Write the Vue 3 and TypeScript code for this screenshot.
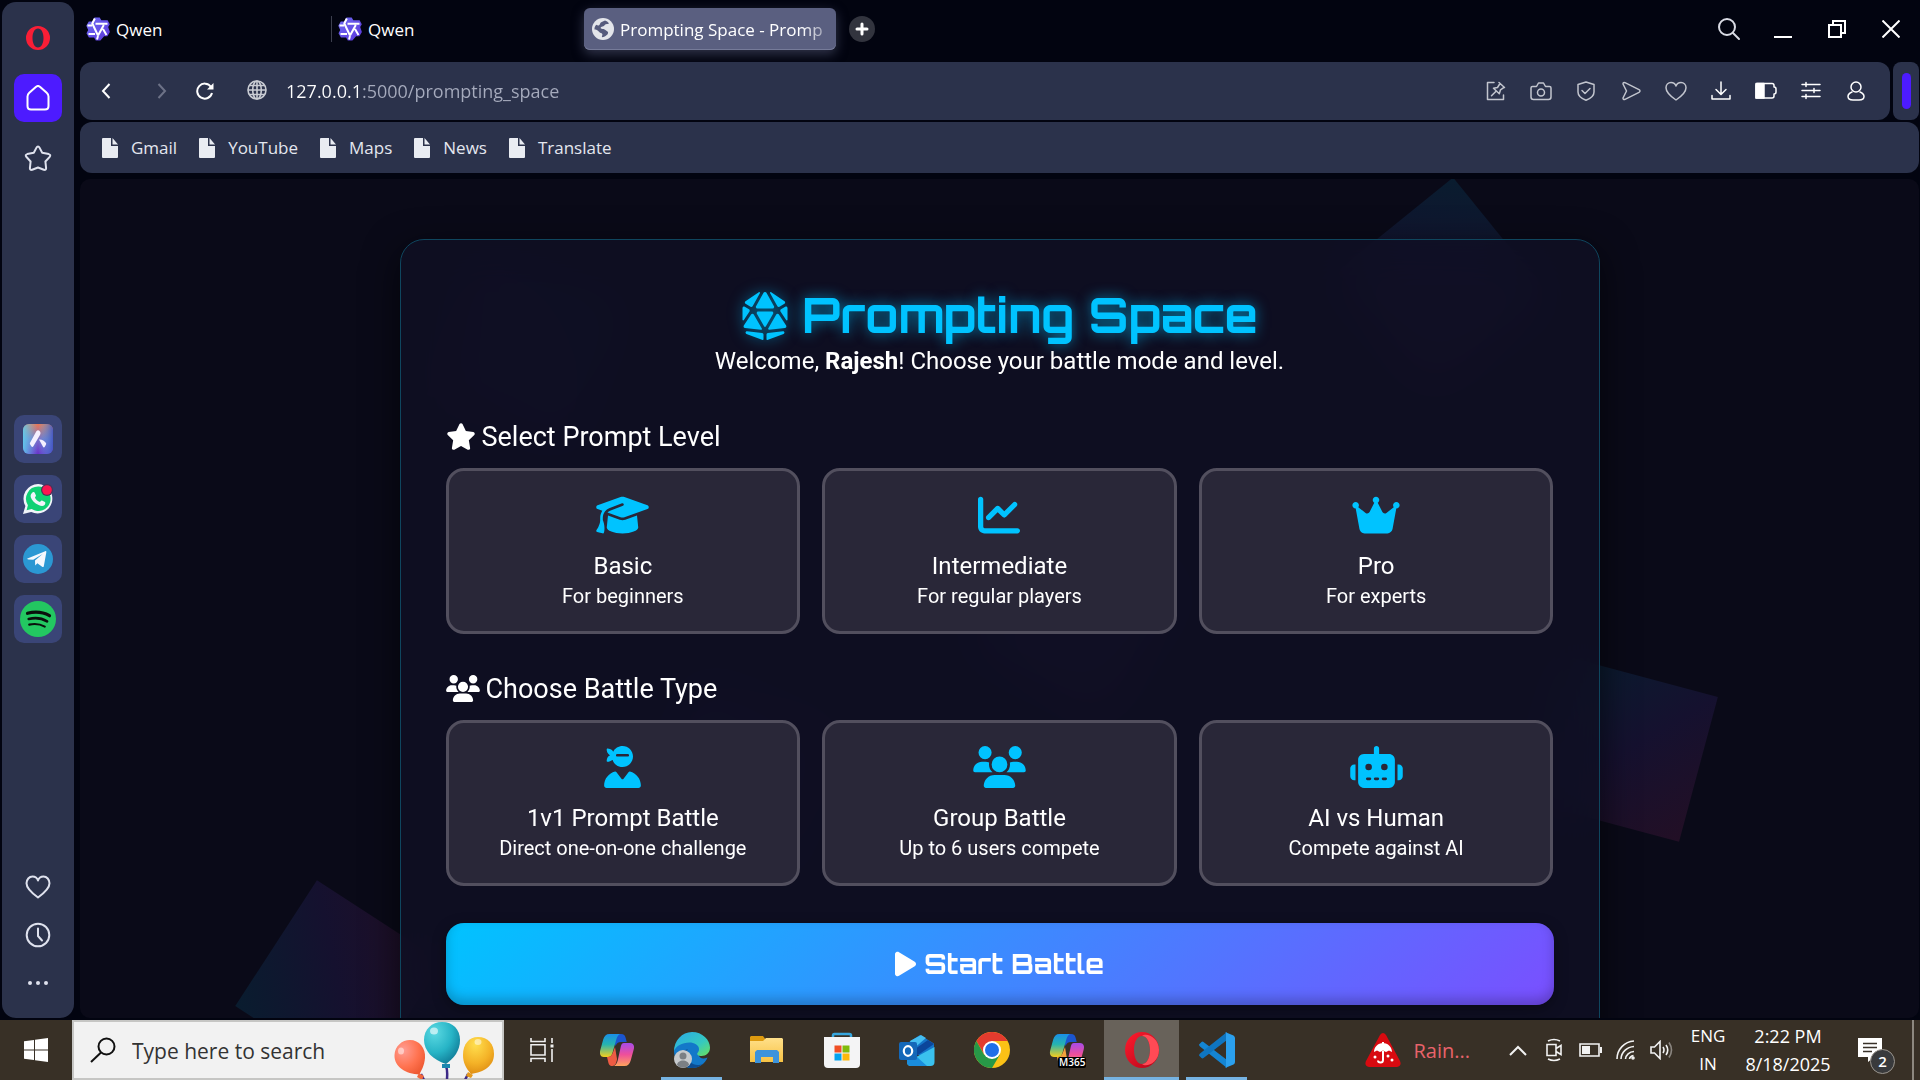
<script setup lang="ts">
import { ref } from 'vue'

interface Option {
  id: string
  title: string
  note: string
  box: string
  width: number
  path: string
}

const usersPath =
  'M144 0a80 80 0 1 1 0 160A80 80 0 1 1 144 0zM512 0a80 80 0 1 1 0 160A80 80 0 1 1 512 0zM0 298.7C0 239.8 47.8 192 106.7 192h42.7c15.9 0 31 3.5 44.6 9.7c-1.3 7.2-1.9 14.7-1.9 22.3c0 38.2 16.8 72.5 43.3 96c-.2 0-.4 0-.7 0H21.3C9.6 320 0 310.4 0 298.7zM405.3 320c-.2 0-.4 0-.7 0c26.6-23.5 43.3-57.8 43.3-96c0-7.6-.7-15-1.9-22.3c13.6-6.3 28.7-9.7 44.6-9.7h42.7C592.2 192 640 239.8 640 298.7c0 11.8-9.6 21.3-21.3 21.3H405.3zM224 224a96 96 0 1 1 192 0 96 96 0 1 1 -192 0zM128 485.3C128 411.7 187.7 352 261.3 352H378.7C452.3 352 512 411.7 512 485.3c0 14.7-11.9 26.7-26.7 26.7H154.7c-14.7 0-26.7-11.9-26.7-26.7z'

const levels: Option[] = [
  {
    id: 'basic',
    title: 'Basic',
    note: 'For beginners',
    box: '0 0 640 512',
    width: 53,
    path: 'M320 32c-8.1 0-16.1 1.4-23.7 4.1L15.8 137.4C6.3 140.9 0 149.9 0 160s6.3 19.1 15.8 22.6l57.9 20.9C57.3 229.3 48 259.8 48 291.9v28.1c0 28.4-10.8 57.7-22.3 80.8c-6.5 13-13.9 25.8-22.5 37.6C0 442.7-.9 448.3 .9 453.4s6 8.9 11.2 10.2l64 16c4.2 1.1 8.7 .3 12.4-2s6.3-6.1 7.1-10.4c8.6-42.8 4.3-81.2-2.1-108.7C90.3 344.3 86 329.8 80 316.5V291.9c0-30.2 10.2-58.7 27.9-81.5c12.9-15.5 29.6-28 49.2-35.7l157-61.7c8.2-3.2 17.5 .8 20.7 9s-.8 17.5-9 20.7l-157 61.7c-12.4 4.9-23.3 12.4-32.2 21.6l159.6 57.6c7.6 2.7 15.6 4.1 23.7 4.1s16.1-1.4 23.7-4.1L624.2 182.6c9.5-3.4 15.8-12.5 15.8-22.6s-6.3-19.1-15.8-22.6L343.7 36.1C336.1 33.4 328.1 32 320 32zM128 408c0 35.3 86 72 192 72s192-36.7 192-72L496.7 262.6 354.5 314c-11.1 4-22.8 6-34.5 6s-23.5-2-34.5-6L143.3 262.6 128 408z',
  },
  {
    id: 'intermediate',
    title: 'Intermediate',
    note: 'For regular players',
    box: '0 0 512 512',
    width: 42,
    path: 'M64 64c0-17.7-14.3-32-32-32S0 46.3 0 64V400c0 44.2 35.8 80 80 80H480c17.7 0 32-14.3 32-32s-14.3-32-32-32H80c-8.8 0-16-7.2-16-16V64zm406.6 86.6c12.5-12.5 12.5-32.8 0-45.3s-32.8-12.5-45.3 0L320 210.7l-57.4-57.4c-12.5-12.5-32.8-12.5-45.3 0l-112 112c-12.5 12.5-12.5 32.8 0 45.3s32.8 12.5 45.3 0L240 221.3l57.4 57.4c12.5 12.5 32.8 12.5 45.3 0l128-128z',
  },
  {
    id: 'pro',
    title: 'Pro',
    note: 'For experts',
    box: '0 0 576 512',
    width: 48,
    path: 'M309 106c11.4-7 19-19.7 19-34c0-22.1-17.9-40-40-40s-40 17.9-40 40c0 14.4 7.6 27 19 34L209.7 220.6c-9.1 18.2-32.7 23.4-48.6 10.7L72 160c5-6.7 8-15 8-24c0-22.1-17.9-40-40-40S0 113.9 0 136s17.9 40 40 40c.2 0 .5 0 .7 0L86.4 427.4c5.5 30.4 32 52.6 63 52.6H426.6c30.9 0 57.4-22.1 63-52.6L535.3 176c.2 0 .5 0 .7 0c22.1 0 40-17.9 40-40s-17.9-40-40-40s-40 17.9-40 40c0 9 3 17.3 8 24l-89.1 71.3c-15.9 12.7-39.5 7.5-48.6-10.7L309 106z',
  },
]

const battles: Option[] = [
  {
    id: 'duel',
    title: '1v1 Prompt Battle',
    note: 'Direct one-on-one challenge',
    box: '0 0 448 512',
    width: 37,
    path: 'M224 256c-57.2 0-105.6-37.5-122-89.3c-1.1 1.3-2.2 2.6-3.5 3.8c-15.8 15.8-38.8 20.7-53.6 22.1c-8.1 .8-14.6-5.7-13.8-13.8c1.4-14.7 6.3-37.8 22.1-53.6c5.8-5.8 12.6-10.1 19.6-13.4c-7-3.2-13.8-7.6-19.6-13.4C37.4 82.7 32.6 59.7 31.1 44.9c-.8-8.1 5.7-14.6 13.8-13.8c14.7 1.4 37.8 6.3 53.6 22.1c4.8 4.8 8.7 10.4 11.7 16.1C131.4 28.2 174.4 0 224 0c70.7 0 128 57.3 128 128s-57.3 128-128 128zM0 482.3C0 399.5 56.4 330 132.8 309.9c6-1.6 12.2 .9 15.9 5.8l62.5 83.3c6.4 8.5 19.2 8.5 25.6 0l62.5-83.3c3.7-4.9 9.9-7.4 15.9-5.8C391.6 330 448 399.5 448 482.3c0 16.4-13.3 29.7-29.7 29.7H29.7C13.3 512 0 498.7 0 482.3zM160 96c-8.8 0-16 7.2-16 16s7.2 16 16 16H288c8.8 0 16-7.2 16-16s-7.2-16-16-16H160z',
  },
  {
    id: 'group',
    title: 'Group Battle',
    note: 'Up to 6 users compete',
    box: '0 0 640 512',
    width: 53,
    path: usersPath,
  },
  {
    id: 'ai',
    title: 'AI vs Human',
    note: 'Compete against AI',
    box: '0 0 640 512',
    width: 53,
    path: 'M320 0c17.7 0 32 14.3 32 32V96H472c39.8 0 72 32.2 72 72V440c0 39.8-32.2 72-72 72H168c-39.8 0-72-32.2-72-72V168c0-39.8 32.2-72 72-72H288V32c0-17.7 14.3-32 32-32zM208 384c-8.8 0-16 7.2-16 16s7.2 16 16 16h32c8.8 0 16-7.2 16-16s-7.2-16-16-16H208zm96 0c-8.8 0-16 7.2-16 16s7.2 16 16 16h32c8.8 0 16-7.2 16-16s-7.2-16-16-16H304zm96 0c-8.8 0-16 7.2-16 16s7.2 16 16 16h32c8.8 0 16-7.2 16-16s-7.2-16-16-16H400zM264 256a40 40 0 1 0 -80 0 40 40 0 1 0 80 0zm152 40a40 40 0 1 0 0-80 40 40 0 1 0 0 80zM48 224H64V416H48c-26.5 0-48-21.5-48-48V272c0-26.5 21.5-48 48-48zm544 0c26.5 0 48 21.5 48 48v96c0 26.5-21.5 48-48 48H576V224h16z',
  },
]

const bookmarks = ['Gmail', 'YouTube', 'Maps', 'News', 'Translate']
const address = ref('127.0.0.1:5000/prompting_space')
const query = ref('')
</script>

<template>
  <div class="desktop">
    <svg class="defs" width="0" height="0" aria-hidden="true">
      <defs>
        <linearGradient id="qwen" x1="0" y1="0" x2="1" y2="1">
          <stop offset="0" stop-color="#6f6cf5" /><stop offset="1" stop-color="#5a35d8" />
        </linearGradient>
        <linearGradient id="aria" x1="0" y1="0" x2="0" y2="1">
          <stop offset="0" stop-color="#ee7450" /><stop offset=".5" stop-color="#7a70c8" /><stop offset="1" stop-color="#6a2fc9" />
        </linearGradient>
        <linearGradient id="ariaSide" x1="0" y1="0" x2="1" y2="0">
          <stop offset="0" stop-color="#5fd0ee" stop-opacity=".9" /><stop offset=".5" stop-color="#5fd0ee" stop-opacity="0" /><stop offset="1" stop-color="#3f56c4" stop-opacity=".9" />
        </linearGradient>
        <linearGradient id="copA" x1="0" y1="0" x2="0" y2="1">
          <stop offset="0" stop-color="#1a8fe8" /><stop offset=".45" stop-color="#25b4b0" /><stop offset="1" stop-color="#f5cf1d" />
        </linearGradient>
        <linearGradient id="copB" x1="0" y1="0" x2="0" y2="1">
          <stop offset="0" stop-color="#a54bea" /><stop offset=".5" stop-color="#ee4f9b" /><stop offset="1" stop-color="#ffa35c" />
        </linearGradient>
        <linearGradient id="edgeTop" x1="0" y1="0" x2="1" y2="1">
          <stop offset="0" stop-color="#2aa8e8" /><stop offset=".6" stop-color="#35c9c0" /><stop offset="1" stop-color="#6be05a" />
        </linearGradient>
        <linearGradient id="folder" x1="0" y1="0" x2="0" y2="1">
          <stop offset="0" stop-color="#ffe08a" /><stop offset="1" stop-color="#f7c244" />
        </linearGradient>
        <linearGradient id="operaRing" x1="0" y1="0" x2="1" y2="1">
          <stop offset="0" stop-color="#ff1b2d" /><stop offset="1" stop-color="#b3061a" />
        </linearGradient>
        <radialGradient id="balRed" cx=".3" cy=".3" r=".8">
          <stop offset="0" stop-color="#ff9d93" /><stop offset=".6" stop-color="#ff7350" /><stop offset="1" stop-color="#ee5a33" />
        </radialGradient>
        <radialGradient id="balTeal" cx=".3" cy=".25" r=".8">
          <stop offset="0" stop-color="#5bd9e2" /><stop offset=".6" stop-color="#27b4c6" /><stop offset="1" stop-color="#12809b" />
        </radialGradient>
        <radialGradient id="balGold" cx=".4" cy=".2" r=".85">
          <stop offset="0" stop-color="#ffdf4e" /><stop offset=".6" stop-color="#f4b227" /><stop offset="1" stop-color="#dd8a12" />
        </radialGradient>
      </defs>
    </svg>

    <div class="window">
      <aside class="sidebar">
        <button class="side-btn" aria-label="Opera">
          <svg width="26" height="26" viewBox="0 0 26 26"><path fill="#fa1e36" fill-rule="evenodd" d="M13 1a12 12 0 1 0 0 24a12 12 0 1 0 0-24zM13 3.500c3.400 0 5.500 4.200 5.500 9.500s-2.100 9.500-5.500 9.500s-5.500-4.200-5.500-9.500s2.100-9.500 5.500-9.500z" /></svg>
        </button>
        <button class="side-btn home" aria-label="Home">
          <svg width="26" height="26" viewBox="0 0 26 26" fill="none" stroke="#fff" stroke-width="2" stroke-linejoin="round"><path d="M2.500 11.500c0-1.500.6-2.600 1.800-3.700L10.800 2c1.300-1.200 3.100-1.200 4.400 0l6.500 5.800c1.200 1.100 1.800 2.200 1.800 3.700V21c0 2-1.500 3.500-3.500 3.500H6c-2 0-3.500-1.500-3.500-3.500z" /></svg>
        </button>
        <button class="side-btn" aria-label="Pinboards">
          <svg width="28" height="28" viewBox="0 0 28 28" fill="none" stroke="#dfe2ee" stroke-width="2" stroke-linejoin="round"><path d="M14 2.500c.7 0 1.200.5 1.500 1.100l2.700 5.200 6.600 1.300c1.500.4 1.900 1.600.9 2.700l-4.300 4.700.7 6.600c.1 1.500-1 2.200-2.300 1.600L14 23.500l-5.800 2.200c-1.300.6-2.400-.1-2.300-1.600l.7-6.600-4.300-4.700c-1-1.100-.6-2.300.9-2.700l6.600-1.300 2.700-5.200c.3-.6.800-1.100 1.500-1.100z" /></svg>
        </button>

        <div class="apps">
          <button class="side-btn tile" aria-label="Aria">
            <svg width="30" height="30" viewBox="0 0 30 30"><rect width="30" height="30" rx="6" fill="url(#aria)" /><rect width="30" height="30" rx="6" fill="url(#ariaSide)" /><path fill="#f4f0ff" d="M13.500 7c1-1 2.500-.8 3.300.3.800 1.200 1 2.200.3 3.500L10.500 22c-.6 1-1.400 1.300-2 .5L7.200 20.500c-.5-.7-.4-1.400 0-2zM16 15.500c2.500-.4 5.600 1.200 7 3.600.3.600.2 1.200-.1 1.700l-1.100 2c-.5.8-1.300.8-1.800 0z" /></svg>
          </button>
          <button class="side-btn tile" aria-label="WhatsApp">
            <svg width="30" height="30" viewBox="0 0 30 30"><path fill="#f1f4fa" d="M15.200 0A14.700 14.700 0 0 0 2.400 22L0 30l8.200-2.100A14.700 14.700 0 1 0 15.200 0z" /><path fill="#0fd174" d="M15.200 2.600A12.200 12.200 0 0 0 4.900 21.300l-1.300 5 5.100-1.300A12.200 12.200 0 1 0 15.200 2.600z" /><path fill="#f1f4fa" d="M9.700 8.300c.6-.5 1.500-.5 1.900.2l1.300 2.700c.3.700-.4 1.500-1 2.200.9 2 2.600 3.600 5.100 4.500.7-.7 1.200-1.600 2-1.300l2.900 1.400c.8.500.3 2.300-.3 2.900-1.500 1.500-3.600 1.200-6 .1C11.500 19 8.500 16 7.700 12.900c-.4-2 .6-3.500 2-4.600z" /><circle cx="24" cy="6" r="6" fill="#4a3358" /><circle cx="24" cy="6" r="4.800" fill="#fb1650" /></svg>
          </button>
          <button class="side-btn tile" aria-label="Telegram">
            <svg width="30" height="30" viewBox="0 0 30 30"><circle cx="15" cy="15" r="15" fill="#2b98d3" /><path fill="#f5f9fd" d="M4.500 14.600 22.200 7.200c.8-.3 1.300.1 1.100 1.200l-2.500 13.800c-.2.900-.9 1.100-1.700.6l-4.700-3.600-2.200 2.200-.2-4.800 7.600-6.600-9.400 5.800-4.900-.2c-.9-.2-1.500-.6-.8-1z" /></svg>
          </button>
          <button class="side-btn tile" aria-label="Spotify">
            <svg width="36" height="36" viewBox="0 0 36 36"><circle cx="18" cy="18" r="18" fill="#23c761" /><g fill="none" stroke="#0a0f0c" stroke-linecap="round"><path stroke-width="3.200" d="M7.500 12.300c8-2 15.500-1.200 22 2.400" /><path stroke-width="2.600" d="M8.700 18c6.500-1.600 12.800-1 18.400 2.300" /><path stroke-width="2.100" d="M9.200 23.600c5.400-1.200 10.600-.8 15.600 2" /></g></svg>
          </button>
        </div>

        <div class="side-foot">
          <button class="side-btn small" aria-label="Favourites">
            <svg width="26" height="24" viewBox="0 0 26 24" fill="none" stroke="#dfe2ee" stroke-width="2" stroke-linejoin="round"><path d="M13 22.500C6 17.500 1.500 13.500 1.500 8.300C1.500 4.500 4.200 1.500 7.500 1.500c2.700 0 4.700 1.500 5.500 4 .8-2.500 2.800-4 5.500-4 3.300 0 6 3 6 6.800C24.500 13.500 20 17.500 13 22.500z" /></svg>
          </button>
          <button class="side-btn small" aria-label="History">
            <svg width="26" height="26" viewBox="0 0 26 26" fill="none" stroke="#dfe2ee" stroke-width="2" stroke-linecap="round"><circle cx="13" cy="13" r="11.300" /><path d="M13 6.500V14l4 4.500" /></svg>
          </button>
          <button class="side-btn small" aria-label="More">
            <svg width="22" height="6" viewBox="0 0 22 6" fill="#dfe2ee"><circle cx="3" cy="3" r="2" /><circle cx="11" cy="3" r="2" /><circle cx="19" cy="3" r="2" /></svg>
          </button>
        </div>
      </aside>

      <div class="browser">
        <header class="tabs">
          <button v-for="n in 2" :key="n" class="tab">
            <svg width="24" height="24" viewBox="0 0 24 24"><path fill="url(#qwen)" d="M8.500.5h5.200l1.600 2.800h6.300l2.200 3.900-1.600 2.900 1.700 5-2.500 4.200h-3.300l-3.700 4.200H9.800l-1.700-3.100H2.900L.5 16.300l1.700-3.200L.3 8.700l2.500-4.300h3.500z" /><path fill="none" stroke="#fff" stroke-width="2" stroke-linejoin="round" d="M8.800 1.500 6.300 6.500 12 18.500M1.500 8.500H6M9.500 6.800h12M17.800 8 12 18.500M17 12l3.500 6M2.500 17h6.500M12 19l-1 3.500" /></svg>
            <span>Qwen</span>
          </button>
          <button class="tab active">
            <svg width="22" height="22" viewBox="0 0 22 22"><circle cx="11" cy="11" r="11" fill="#e3e5ea" /><path fill="#565b7c" d="M13 2.500c1.500.5 3 1.500 4 2.800-.7 1-2 .8-3 .9-1.300.2-1.500 1.500-2.600 2-1 .5-2.400.2-2.700 1.400-.3 1 .7 1.300 1.800 1.300 1.700 0 2.700.5 3.600 1.700.8 1 2 .8 2 2 0 1.500-1 2.500-2.200 3.200-1 .7-2.300 1.500-3.900 1.500-.5-1 .8-2 .3-3.200-.5-1.300-2.500-1-3.300-2.300C5.800 12 4 11.500 2.500 11.500c-.2-2 .7-3.500 1.700-4.700 1 .4 1.800 1 2.900.5 1.200-.6.7-2 1.700-2.700C10 3.700 11.700 3.500 13 2.500z" /></svg>
            <span class="fade">Prompting Space - Promp</span>
          </button>
          <button class="new-tab" aria-label="New tab">
            <svg width="14" height="14" viewBox="0 0 14 14" stroke="#fff" stroke-width="3" stroke-linecap="round"><path d="M7 2v10M2 7h10" /></svg>
          </button>
          <div class="win-ctl">
            <button aria-label="Search tabs"><svg width="24" height="24" viewBox="0 0 24 24" fill="none" stroke="#d9dbe4" stroke-width="2" stroke-linecap="round"><circle cx="10" cy="10" r="8" /><path d="m16 16 6 6" /></svg></button>
            <button aria-label="Minimize"><svg width="18" height="18" viewBox="0 0 18 18"><path fill="#fff" d="M0 16h18v2H0z" /></svg></button>
            <button aria-label="Restore"><svg width="18" height="18" viewBox="0 0 18 18" fill="none" stroke="#fff" stroke-width="2"><path d="M1 5h12v12H1zM5 5V1h12v12h-4" /></svg></button>
            <button aria-label="Close"><svg width="18" height="18" viewBox="0 0 18 18" stroke="#fff" stroke-width="2"><path d="m.5.5 17 17M17.500.5l-17 17" /></svg></button>
          </div>
        </header>

        <div class="bar-row">
          <nav class="addressbar">
            <div class="nav">
              <button aria-label="Back"><svg width="10" height="16" viewBox="0 0 10 16" fill="none" stroke="#fff" stroke-width="2"><path d="M8.500 1 2 8l6.500 7" /></svg></button>
              <button aria-label="Forward"><svg width="10" height="16" viewBox="0 0 10 16" fill="none" stroke="#6d7287" stroke-width="2"><path d="M1.500 1 8 8l-6.500 7" /></svg></button>
              <button aria-label="Reload"><svg width="18" height="18" viewBox="0 0 18 18" fill="none" stroke="#fff" stroke-width="2"><path d="M16 11a7.500 7.500 0 1 1-1-6" /><path fill="#fff" stroke="none" d="M17.500 1v6.500H11z" /></svg></button>
            </div>
            <svg class="globe" width="20" height="20" viewBox="0 0 20 20" fill="none" stroke="#c9ccd3" stroke-width="1.600"><circle cx="10" cy="10" r="9" /><ellipse cx="10" cy="10" rx="4.300" ry="9" /><path d="M10 1v18M1 10h18M2.500 5.500h15M2.500 14.500h15" /></svg>
            <input v-model="address" class="url" type="text" aria-label="Address" spellcheck="false" />
            <div class="tools">
              <button aria-label="Pin"><svg class="dim" viewBox="0 0 22 22"><path d="M9 2.500H2.500v17h16V15M14 2.500l5.500 5M15 3.500l-2.500 4-4 .8 5.800 5.500 1.200-4 3.500-2.500M11 11.200l-4.500 4.600" /></svg></button>
              <button aria-label="Snapshot"><svg class="dim" viewBox="0 0 22 22"><path d="M2.500 6.500h4l2-3.500h5l2 3.500h4c1 0 1.500.6 1.500 1.500V17c0 1.500-1 2.500-2.500 2.500h-15C2 19.500 1 18.500 1 17V8c0-.9.500-1.500 1.500-1.500z" /><circle cx="11" cy="12.500" r="3.500" /></svg></button>
              <button aria-label="Shield"><svg class="dim" viewBox="0 0 22 22"><path d="M11 2l8 2.500V12c0 3.500-3.500 6.500-8 8.200C6.500 18.500 3 15.500 3 12V4.500z" /><path d="m7 10.500 3 3 5-5" /></svg></button>
              <button aria-label="Send"><svg class="dim" viewBox="0 0 22 22"><path d="M3 4c0-1.300.8-1.800 2-1.300l14 7c1.300.7 1.300 1.900 0 2.600l-14 7c-1.200.5-2 0-2-1.300L6.500 11z" /></svg></button>
              <button aria-label="Favourite"><svg class="dim" viewBox="0 0 22 22"><path d="M11 20C5 16 1 12.300 1 7.800C1 4.700 3.200 2.500 6 2.500c2.400 0 4.200 1.200 5 3.500.8-2.300 2.600-3.500 5-3.500 2.800 0 5 2.200 5 5.300C21 12.300 17 16 11 20z" /></svg></button>
              <button aria-label="Downloads"><svg viewBox="0 0 22 22"><path d="M11 2v12M6 9.500l5 5 5-5M2 15.500V19h18v-3.500" /></svg></button>
              <button aria-label="Battery saver"><svg viewBox="0 0 22 22"><path d="M2 3.500h15c1.500 0 2 1 2 2v1.500c1 0 2 .8 2 2v3c0 1.200-1 2-2 2V16c0 1-.5 2-2 2H1V5z" /><path fill="#fff" d="M1 3.500h8V18H1z" /></svg></button>
              <button aria-label="Easy setup"><svg viewBox="0 0 22 22"><path d="M2 4.500h18M2 10.500h18M2 16.500h18M6 2.500v4M14 8.500v4M6 14.500v4" /></svg></button>
              <button aria-label="Profile"><svg viewBox="0 0 22 22"><circle cx="11" cy="7" r="5" /><path d="M7 12c-2.500 1-4 2.500-4 4.500 0 2.500 2 3.500 5 3.500h6c3 0 5-1 5-3.500 0-2-1.500-3.500-4-4.500" /></svg></button>
            </div>
          </nav>
          <div class="panel-toggle"><span></span></div>
        </div>

        <nav class="bookmarks">
          <a v-for="b in bookmarks" :key="b" href="#">
            <svg width="16" height="20" viewBox="0 0 16 20"><path fill="#e9ecf2" d="M1 0h8v8h7v11a1 1 0 0 1-1 1H1a1 1 0 0 1-1-1V1a1 1 0 0 1 1-1zM10.500 0 16 6.500h-5.500z" /></svg>
            <span>{{ b }}</span>
          </a>
        </nav>

        <main class="page">
          <i class="shape s1"></i>
          <i class="shape s2"></i>
          <i class="shape s3"></i>
          <i class="shape s4"></i>
          <i class="shape s5"></i>
          <i class="shape s6"></i>

          <section class="panel">
            <h1>
              <svg width="48" height="48" viewBox="0 0 512 512"><path fill="currentColor" d="M48.700 125.800l53.200 31.900c7.800 4.700 17.800 2 22.200-5.900L201.600 12.100c3-5.400-.9-12.100-7.100-12.100c-1.600 0-3.200 .5-4.600 1.400L47.900 98.800c-9.600 6.600-9.200 20.900 .8 26.900zM16 171.700V295.300c0 8 10.400 11 14.700 4.400l60-92c5-7.600 2.600-17.800-5.200-22.500L40.200 158C29.600 151.600 16 159.300 16 171.700zM310.400 12.100l77.600 139.600c4.400 7.900 14.500 10.600 22.200 5.900l53.200-31.900c10-6 10.400-20.300 .8-26.900L322.100 1.400c-1.400-.9-3-1.400-4.600-1.400c-6.200 0-10.100 6.700-7.100 12.100zM496 171.700c0-12.400-13.600-20.100-24.200-13.700l-45.300 27.200c-7.800 4.700-10.100 14.900-5.200 22.500l60 92c4.300 6.700 14.700 3.600 14.700-4.400V171.700zm-49.300 246L286.100 436.600c-8.100 .9-14.100 7.800-14.100 15.900v52.800c0 3.700 3 6.800 6.800 6.800c.8 0 1.600-.1 2.400-.4l172.700-64c6.100-2.200 10.100-8 10.100-14.500c0-9.300-8.100-16.500-17.300-15.400zM233.200 512c3.700 0 6.800-3 6.800-6.800V452.600c0-8.100-6.100-14.900-14.100-15.900l-160.600-19c-9.200-1.100-17.300 6.100-17.300 15.400c0 6.500 4 12.300 10.100 14.500l172.700 64c.8 .3 1.600 .4 2.400 .4zM41.700 382.900l170.900 20.200c7.800 .9 13.400-7.500 9.500-14.300l-85.700-150c-5.900-10.400-20.700-10.800-27.300-.8L30.200 358.200c-6.500 9.900-.3 23.300 11.500 24.700zm439.600-24.800L402.900 238.100c-6.500-10-21.400-9.600-27.300 .8L290.200 388.500c-3.900 6.800 1.600 15.200 9.500 14.300l170.100-20c11.800-1.400 18-14.700 11.500-24.600zm-216.900 11l78.400-137.200c6.100-10.700-1.600-23.900-13.900-23.900H183.100c-12.300 0-20 13.300-13.900 23.900l78.400 137.200c3.700 6.400 13 6.400 16.700 0zM174.400 176H337.600c12.200 0 19.900-13.100 14-23.800l-80-144c-2.800-5.100-8.200-8.200-14-8.200h-3.200c-5.800 0-11.200 3.200-14 8.200l-80 144c-5.900 10.700 1.800 23.800 14 23.800z" /></svg>
              <span>Prompting Space</span>
            </h1>
            <p class="welcome">Welcome, <strong>Rajesh</strong>! Choose your battle mode and level.</p>

            <h2 class="first">
              <svg width="30" height="27" viewBox="0 0 576 512"><path fill="currentColor" d="M316.900 18C311.600 7 300.400 0 288.100 0s-23.400 7-28.800 18L195 150.300 51.400 171.500c-12 1.800-22 10.200-25.700 21.700s-.7 24.200 7.900 32.700L137.800 329 113.200 474.700c-2 12 3 24.200 12.900 31.300s23 8 33.800 2.300l128.300-68.500 128.300 68.500c10.800 5.700 23.900 4.900 33.800-2.300s14.900-19.300 12.900-31.300L438.500 329 542.700 225.900c8.600-8.500 11.700-21.200 7.900-32.700s-13.700-19.900-25.700-21.700L381.200 150.300 316.900 18z" /></svg>
              <span>Select Prompt Level</span>
            </h2>
            <div class="options">
              <button v-for="o in levels" :key="o.id" class="option">
                <svg :width="o.width" height="42" :viewBox="o.box"><path fill="currentColor" :d="o.path" /></svg>
                <span class="name">{{ o.title }}</span>
                <span class="note">{{ o.note }}</span>
              </button>
            </div>

            <h2>
              <svg width="34" height="27" viewBox="0 0 640 512"><path fill="currentColor" :d="usersPath" /></svg>
              <span>Choose Battle Type</span>
            </h2>
            <div class="options">
              <button v-for="o in battles" :key="o.id" class="option">
                <svg :width="o.width" height="42" :viewBox="o.box"><path fill="currentColor" :d="o.path" /></svg>
                <span class="name">{{ o.title }}</span>
                <span class="note">{{ o.note }}</span>
              </button>
            </div>

            <button class="start">
              <svg width="21" height="28" viewBox="0 0 384 512"><path fill="currentColor" d="M73 39c-14.800-9.100-33.400-9.400-48.500-.9S0 62.600 0 80V432c0 17.400 9.400 33.400 24.500 41.900s33.700 8.100 48.500-.9L361 297c14.300-8.700 23-24.200 23-41s-8.700-32.200-23-41L73 39z" /></svg>
              <span>Start Battle</span>
            </button>
          </section>
        </main>
      </div>
    </div>

    <footer class="taskbar">
      <button class="start-menu" aria-label="Start">
        <svg width="24" height="24" viewBox="0 0 24 24" fill="#fff"><path d="M0 3.300 10 2v9.500H0zM11 1.800 24 0v11.500H11zM0 12.500h10V22L0 20.700zM11 12.500h13V24L11 22.200z" /></svg>
      </button>
      <label class="search">
        <svg width="26" height="26" viewBox="0 0 26 26" fill="none" stroke="#111" stroke-width="2"><circle cx="16.500" cy="9.500" r="8" /><path d="M11 15.500 1 25" /></svg>
        <input v-model="query" type="text" placeholder="Type here to search" aria-label="Search" />
        <svg class="balloons" width="102" height="57" viewBox="0 0 102 57">
          <path fill="none" stroke="#3d2a86" stroke-width="2.500" d="M27 52l3 6M52 44c2 5 1 9 1 14M74 52l-3 6" />
          <path fill="url(#balRed)" d="M16 18c9 0 16 8 15 18-.6 8-4 13-5.500 16.500C12 52 0 45 .5 33 1 24 8 18 16 18z" />
          <path fill="url(#balGold)" d="M84 15c10 0 16 7 16 17 0 12-10 18-23 20-5-6-8-11-8-19 0-11 6-18 15-18z" />
          <path fill="url(#balTeal)" d="M48 0c11 0 18 7.500 18 18 0 11-6 18-14 24C39 38 30 29 30 18 30 7 38 0 48 0z" />
          <path fill="#f0673c" d="m25 51 5 3-2 4-5-3z" /><path fill="#1b86ae" d="M48 42h8v4h-8z" /><path fill="#e5991c" d="m74 50 5 3-2 3-5-2z" />
          <ellipse cx="7" cy="29" rx="3" ry="3.500" fill="#fff" opacity=".5" /><ellipse cx="40" cy="9" rx="4" ry="3.500" fill="#fff" opacity=".6" /><ellipse cx="84" cy="20" rx="3.500" ry="3" fill="#fff" opacity=".5" />
        </svg>
      </label>

      <div class="pinned">
        <button aria-label="Task view">
          <svg width="24" height="24" viewBox="0 0 24 24" fill="none" stroke="#f0f0f0" stroke-width="1.600"><path d="M1 0v3.500h14V0M1 6.800h14V17H1zM1 24v-3.500h14V24M22 0v5M22 11v13" /><path fill="#f0f0f0" stroke="none" d="M20.500 6.500h3v3h-3z" /></svg>
        </button>
        <button aria-label="Copilot">
          <svg width="34" height="32" viewBox="0 0 34 32"><path fill="#1b55cf" d="M11 0h10c3 0 4 1.500 4.700 4l1 4H21c-3 0-4.500 1.500-5.300 4z" /><path fill="url(#copA)" d="M9.500 0H20c-2 1-3 3-3.700 5.500l-4 14C11.500 22 10 23 8 23H4c-3.500 0-4.700-3-3.800-6.500l3-11C4.300 2 6 0 9.500 0z" /><path fill="url(#copB)" d="M24 9h6c3.500 0 4.700 3 3.700 6.500l-3 11C29.700 30 28 32 24.500 32H14c2-1 3-3 3.700-5.500l3-13.500C21.300 10.500 22 9 24 9z" /><path fill="#ee5b43" d="M7 23c3 0 4.500-1 5.500-3.500L15 13l2 12c-.4 3-1.500 7-4.500 7C9.500 32 8.500 30 8 27z" /></svg>
        </button>
        <button class="open" aria-label="Edge">
          <svg width="36" height="36" viewBox="0 0 36 36"><path fill="#1378c9" d="M18 8c7 0 11 3.500 11 8 0 3.500-4 4-4 7 0 3.500 4.500 4.500 8.500 2.500C31 31.500 25.500 36 18 36 8 36 0 28 0 19.500 0 12 8 8 18 8z" /><path fill="url(#edgeTop)" d="M18 0c10.500 0 18 8 18 15.500 0 5.500-4 8.500-8.500 8.500-3.500 0-5-1.500-4-3 1.200-1.500 1.500-2.300 1.500-4 0-4-5-6.500-9.500-6.500C8 10.500 1.500 14 0 19.500 0 8.500 8 0 18 0z" /><path fill="#0d4d93" d="M14 17c-3 3-2.500 9 2 13 4 3.500 9 4 13 1.500-3 3-7 4.500-11 4.500-6 0-10-5-10-11 0-4 2-7 6-8z" /><circle cx="9" cy="27" r="9" fill="#c7cacd" /><circle cx="9" cy="24" r="3.500" fill="#7b7f84" /><path fill="#7b7f84" d="M3 33c.5-6 11.500-6 12 0-3 3.500-9 3.500-12 0z" /></svg>
        </button>
        <button aria-label="File Explorer">
          <svg width="34" height="28" viewBox="0 0 34 28"><path fill="#dd9a0f" d="M1 0h12l3 4-3 3H0V1z" /><path fill="url(#folder)" d="M0 5h13l3-3h16l1 1v23H0z" /><path fill="#3c93dc" d="M5 27V16l2-2h20l2 2v11h-6v-6H11v6z" /></svg>
        </button>
        <button aria-label="Microsoft Store">
          <svg width="36" height="36" viewBox="0 0 36 36"><path fill="none" stroke="#36a6de" stroke-width="2.500" d="M9 7V3.500Q9 2 10.500 2h15Q27 2 27 3.500V7" /><path fill="#f4f4f5" d="M0 5h36v27q0 4-4 4H4q-4 0-4-4z" /><path fill="#f04f24" d="M10.500 13.500h7v7h-7z" /><path fill="#80bb0a" d="M18.500 13.500h7v7h-7z" /><path fill="#04a3ee" d="M10.500 21.500h7v7h-7z" /><path fill="#fdb80a" d="M18.500 21.500h7v7h-7z" /></svg>
        </button>
        <button aria-label="Outlook">
          <svg width="36" height="31" viewBox="0 0 36 31"><path fill="#1474c8" d="M7 9 21 0l14 8.500V20H7z" /><path fill="#44bdf0" d="m11 6 11-6 5 3L14 14z" /><path fill="#0b469b" d="M35 9 16 22v-8L29 5z" /><path fill="#3ac1ee" d="M35.500 12v15q0 4-4 4H12q-4 0-4-4z" /><path fill="#1a8ddd" d="M8 22h10l10 9H12q-4 0-4-4z" /><rect y="7" width="18" height="18" rx="2" fill="#1468b9" /><ellipse cx="9" cy="16" rx="4.200" ry="4.800" fill="none" stroke="#fff" stroke-width="2.200" /></svg>
        </button>
        <button aria-label="Chrome">
          <svg width="36" height="36" viewBox="0 0 36 36"><circle cx="18" cy="18" r="18" fill="#fbc116" /><path fill="#e33b2e" d="M2.400 9A18 18 0 0 1 33.600 9H18l-8 13z" /><path fill="#279847" d="M2.400 9A18 18 0 0 0 18 36l8-13.500-8 4-8-4z" /><circle cx="18" cy="18" r="9" fill="#fff" /><circle cx="18" cy="18" r="7" fill="#1f6fe8" /></svg>
        </button>
        <button aria-label="Microsoft 365 Copilot" class="m365">
          <svg width="36" height="32" viewBox="0 0 34 32"><path fill="#1b55cf" d="M11 0h10c3 0 4 1.500 4.700 4l1 4H21c-3 0-4.500 1.500-5.300 4z" /><path fill="url(#copA)" d="M9.500 0H20c-2 1-3 3-3.700 5.500l-4 14C11.500 22 10 23 8 23H4c-3.500 0-4.700-3-3.800-6.500l3-11C4.300 2 6 0 9.500 0z" /><path fill="url(#copB)" d="M24 9h6c3.500 0 4.700 3 3.700 6.500l-3 11C29.700 30 28 32 24.500 32H14c2-1 3-3 3.700-5.500l3-13.500C21.300 10.500 22 9 24 9z" /><path fill="#f3a23c" d="M7 23c3 0 4.500-1 5.500-3.500L15 13l2 12c-.4 3-1.500 3-4.500 3C9.500 28 8.500 28 8 27z" /></svg>
          <span>M365</span>
        </button>
        <button class="open current" aria-label="Opera">
          <svg width="34" height="36" viewBox="0 0 34 36"><path fill="url(#operaRing)" fill-rule="evenodd" d="M17 0a17 18 0 1 0 0 36a17 18 0 1 0 0-36zM17 4c4.800 0 8 6 8 14s-3.200 14-8 14s-8-6-8-14 3.200-14 8-14z" /><path fill="#ff4a55" d="M17 4c4-4 17 1 17 14S21 36 17 32c4.800 0 8-6 8-14s-3.200-14-8-14z" /></svg>
        </button>
        <button class="open" aria-label="Visual Studio Code">
          <svg width="36" height="36" viewBox="0 0 36 36"><path fill="#1485d3" d="M0 12.500 2.500 10q1-.8 2 0L28 28v8L1 14.500q-1-1 -1-2z" /><path fill="#0f75c0" d="M0 23.500 2.500 26q1 .8 2 0L28 8V0L1 21.500q-1 1 -1 2z" /><path fill="#2ba0ee" d="m26 0 8.500 3.500Q36 4.500 36 6v24q0 1.500-1.500 2.500L26 36q1-.5 1-2V2q0-1.500-1-2z" /></svg>
        </button>
      </div>

      <div class="tray">
        <button class="weather">
          <svg width="36" height="34" viewBox="0 0 36 34"><path fill="#d80a10" d="M15 2q3-4 6 0l14 26q2 5-3 6H4q-5-1-3-6z" /><path fill="#fff" d="M9 19c0-5 4-9 9-9s9 4 9 9l-3-1.500-3 1.500-3-1.500-3 1.500-3-1.500zM17 9h2v2h-2z" /><path fill="none" stroke="#fff" stroke-width="2" d="M18 18v9q0 2.500-2.500 2.500T13 27.500" /><g fill="#fff"><circle cx="10" cy="24" r="1.500" /><circle cx="23" cy="23" r="1.500" /><circle cx="27" cy="27" r="1.500" /></g></svg>
          <span>Rain...</span>
        </button>
        <div class="status">
          <button aria-label="Hidden icons"><svg width="18" height="11" viewBox="0 0 18 11" fill="none" stroke="#f2f2f2" stroke-width="2"><path d="m1 10 8-8 8 8" /></svg></button>
          <button aria-label="Meet now"><svg width="18" height="24" viewBox="0 0 18 24" fill="none" stroke="#f2f2f2" stroke-width="1.600"><path d="M3 3q6-3 12 0M3 21q6 3 12 0M2 6.500h9v11H2zM11 10.500l5-3v9l-5-3" /></svg></button>
          <button aria-label="Battery"><svg width="23" height="14" viewBox="0 0 23 14"><path fill="none" stroke="#f2f2f2" stroke-width="1.600" d="M1 1h19v12H1z" /><path fill="#f2f2f2" d="M3 3h8v8H3zM21 4h2v6h-2z" /></svg></button>
          <button aria-label="Network"><svg width="20" height="20" viewBox="0 0 20 20" fill="none" stroke="#f2f2f2" stroke-width="1.600"><path d="M1 19A18 18 0 0 1 18 1M5 19A14 13 0 0 1 18 6.500M9.500 19A9 8 0 0 1 18 11.500M13.500 19a5 4 0 0 1 4-3.500" /><circle cx="17" cy="18" r="1" /></svg></button>
          <button aria-label="Volume"><svg width="24" height="20" viewBox="0 0 24 20" fill="none" stroke="#f2f2f2" stroke-width="1.600"><path d="M1 7h3.500L10 1.500v17L4.500 13H1zM13 7q2 3 0 6M16 5q3.500 5 0 10" /><path stroke="#8b8680" d="M19 2.500q5 7.500 0 15" /></svg></button>
        </div>
        <div class="lang"><span>ENG</span><span>IN</span></div>
        <div class="clock"><span>2:22 PM</span><span>8/18/2025</span></div>
        <button class="notice" aria-label="Notifications">
          <svg width="24" height="24" viewBox="0 0 24 24"><path fill="#fff" d="M0 0h24v19H16l-6 5v-5H0z" /><path stroke="#39322a" stroke-width="1.600" d="M5 5.500h14M5 9.500h14M5 13.500h9" /></svg>
          <span>2</span>
        </button>
        <i class="peek"></i>
      </div>
    </footer>
  </div>
</template>

<style>
html,
body,
#app {
  height: 100%;
  background: #020410;
}
</style>

<style scoped>
* {
  box-sizing: border-box;
}

button {
  display: flex;
  align-items: center;
  justify-content: center;
  padding: 0;
  border: 0;
  background: none;
  color: inherit;
  font: inherit;
}

svg {
  display: block;
  flex: none;
}

.defs {
  position: absolute;
}

.desktop {
  display: flex;
  flex-direction: column;
  height: 100vh;
  overflow: hidden;
  background: #020410;
  color: #fff;
  font-family: 'Open Sans', 'Noto Sans', sans-serif;
  font-size: 17px;
}

.window {
  display: flex;
  flex: 1;
  min-height: 0;
  gap: 6px;
  padding: 2px 1px 2px 2px;
}

/* sidebar */
.sidebar {
  display: flex;
  flex-direction: column;
  align-items: center;
  flex: none;
  width: 72px;
  padding: 12px 0 11px;
  gap: 12px;
  border-radius: 14px;
  background: #2b324b;
}

.side-btn {
  flex: none;
  width: 48px;
  height: 48px;
  border-radius: 10px;
}

.home {
  background: #4d1bff;
}

.tile {
  background: #3a4577;
}

.apps {
  display: flex;
  flex-direction: column;
  gap: 12px;
  margin: auto 0;
  padding-top: 12px;
}

.side-foot {
  display: flex;
  flex-direction: column;
}

/* tab strip */
.browser {
  display: flex;
  flex: 1;
  flex-direction: column;
  min-width: 0;
}

.tabs {
  display: flex;
  align-items: center;
  height: 60px;
  padding: 0 18px 6px 0;
}

.tab {
  justify-content: flex-start;
  gap: 6px;
  width: 252px;
  height: 42px;
  padding-left: 6px;
  border-radius: 6px;
}

.tab + .tab:not(.active) {
  position: relative;
}

.tab + .tab:not(.active)::before {
  content: '';
  position: absolute;
  left: -1px;
  top: 8px;
  width: 1px;
  height: 26px;
  background: #3c3f4e;
}

.tab.active {
  gap: 6px;
  padding: 0 4px 0 8px;
  background: #5a5f80;
  box-shadow: 0 4px 12px #5a5f8088, inset 0 -1px 0 #767b99;
}

.fade {
  flex: 1;
  min-width: 0;
  overflow: hidden;
  text-align: left;
  white-space: nowrap;
  mask-image: linear-gradient(90deg, #000 86%, #0003);
}

.new-tab {
  width: 26px;
  height: 26px;
  margin-left: 13px;
  border-radius: 50%;
  background: #32343e;
}

.win-ctl {
  display: flex;
  align-items: center;
  gap: 10px;
  margin-left: auto;
}

.win-ctl button {
  width: 44px;
  height: 36px;
}

.win-ctl button:last-child {
  margin-right: -12px;
}

/* address row */
.bar-row {
  display: flex;
  gap: 3px;
}

.addressbar {
  display: flex;
  flex: 1;
  align-items: center;
  height: 58px;
  padding: 0 22px 0 9px;
  border-radius: 12px;
  background: #2b324b;
}

.nav {
  display: flex;
  align-items: center;
}

.nav button {
  width: 34px;
  height: 34px;
}

.nav button + button {
  margin-left: 22px;
}

.nav button:last-child {
  margin-left: 9px;
}

.globe {
  margin: 0 19px 2px 25px;
}

.url {
  flex: 1;
  min-width: 0;
  height: 32px;
  padding: 0;
  border: 0;
  outline: 0;
  background: linear-gradient(90deg, #fff 75px, #a6abbd 75px);
  background-clip: text;
  color: transparent;
  font: inherit;
  font-size: 18px;
}

.tools {
  display: flex;
  gap: 21px;
}

.tools button {
  width: 24px;
  height: 24px;
}

.tools svg {
  width: 22px;
  height: 22px;
  fill: none;
  stroke: #fff;
  stroke-width: 1.5;
  stroke-linecap: round;
  stroke-linejoin: round;
}

.tools .dim {
  stroke: #c2c5ce;
}

.panel-toggle {
  display: flex;
  align-items: center;
  justify-content: center;
  width: 26px;
  border-radius: 8px;
  background: #2b324b;
}

.panel-toggle span {
  width: 9px;
  height: 36px;
  border-radius: 5px;
  background: #4d1bff;
}

.bookmarks {
  display: flex;
  align-items: center;
  gap: 22px;
  height: 51px;
  margin-top: 2px;
  padding-left: 22px;
  border-radius: 12px;
  background: #2b324b;
}

.bookmarks a {
  display: flex;
  align-items: center;
  gap: 13px;
  color: #e4e7ef;
  text-decoration: none;
}

/* page */
.page {
  position: relative;
  flex: 1;
  min-height: 0;
  margin-top: 6px;
  padding-top: 60px;
  overflow: hidden;
  border-radius: 10px;
  background: #0a0a18;
}

.shape {
  position: absolute;
  width: 150px;
  height: 150px;
  background: linear-gradient(45deg, #00c3ff, #7a4fff, #ff3c9a);
  opacity: 0.1;
}

.s1 {
  left: 10%;
  top: 730px;
  transform: rotate(33deg);
}

.s2 {
  left: 80%;
  top: 496px;
  transform: rotate(105deg);
}

.s3 {
  left: 70%;
  top: 29px;
  transform: rotate(141deg);
}

.s4 {
  left: 20%;
  top: 96px;
  transform: rotate(200deg);
  opacity: 0.06;
}

.s5 {
  left: 50%;
  top: 360px;
  transform: rotate(120deg);
}

.s6 {
  left: 32%;
  top: 520px;
  transform: rotate(20deg);
  opacity: 0.06;
}

.panel {
  position: relative;
  max-width: 1200px;
  margin: 0 auto;
  padding: 50px 45px;
  border: 1px solid #0f465e;
  border-radius: 24px;
  background: #0f0f23d9;
  backdrop-filter: blur(24px);
  box-shadow: 0 10px 36px #000000a0;
  font-family: Roboto, sans-serif;
}

h1 {
  display: flex;
  align-items: flex-start;
  justify-content: center;
  gap: 13px;
  height: 57px;
  margin: 0;
  color: #00c3ff;
  font-family: Orbitron, 'DejaVu Sans', sans-serif;
  font-size: 48px;
  font-weight: 700;
  line-height: 50px;
  text-shadow: 0 0 14px #00c3ffa0;
}

h1 svg {
  margin-top: 2px;
  filter: drop-shadow(0 0 7px #00c3ff80);
}

.welcome {
  margin: 0;
  font-size: 24px;
  line-height: 28px;
  text-align: center;
}

h2 {
  display: flex;
  align-items: center;
  gap: 6px;
  margin: 39px 0 15px;
  font-size: 27px;
  font-weight: 400;
  line-height: 32px;
}

h2 svg {
  margin-bottom: 2px;
}

h2.first {
  margin-top: 46px;
}

.options {
  display: grid;
  grid-template-columns: repeat(3, 1fr);
  gap: 22px;
}

.option {
  flex-direction: column;
  padding: 23px 12px;
  border: 3px solid #524f5e;
  border-radius: 18px;
  background: #292738;
}

.option svg {
  color: #00c3ff;
}

.name {
  margin-top: 16px;
  font-size: 24px;
  line-height: 28px;
}

.note {
  margin-top: 4px;
  font-size: 20px;
  line-height: 24px;
}

.start {
  gap: 8px;
  width: 100%;
  height: 82px;
  margin-top: 37px;
  border-radius: 18px;
  background: linear-gradient(135deg, #00c3ff, #7a4fff);
  box-shadow: inset 0 -6px 12px #00000038, 0 4px 14px #00000060;
  font-family: Orbitron, 'DejaVu Sans', sans-serif;
  font-size: 27px;
  font-weight: 700;
}

/* taskbar */
.taskbar {
  display: flex;
  flex: none;
  height: 60px;
  background: #383026;
}

.start-menu {
  flex: none;
  width: 72px;
}

.search {
  display: flex;
  flex: none;
  align-items: center;
  width: 432px;
  padding-left: 16px;
  border: 2px solid #c6c6c4;
  background: #f2f2f2;
}

.search input {
  flex: 1;
  min-width: 0;
  margin-left: 16px;
  padding: 2px 0 0;
  border: 0;
  outline: 0;
  background: none;
  color: #333;
  font: inherit;
  font-size: 21px;
}

.search input::placeholder {
  color: #333;
  opacity: 1;
}

.balloons {
  margin-right: 6px;
}

.pinned {
  display: flex;
  flex: none;
}

.pinned button {
  position: relative;
  width: 75px;
}

.pinned .open::after {
  content: '';
  position: absolute;
  left: 7px;
  right: 7px;
  bottom: 0;
  height: 3px;
  background: #76b3e2;
}

.pinned .current {
  background: #68625a;
}

.pinned .current::after {
  left: 0;
  right: 0;
}

.m365 span {
  position: absolute;
  left: 29px;
  bottom: 12px;
  padding: 0 1px;
  border-radius: 2px;
  background: #000;
  font-size: 10px;
  font-weight: 600;
  line-height: 11px;
}

.tray {
  display: flex;
  align-items: center;
  margin-left: auto;
}

.weather {
  gap: 12px;
  color: #e8636b;
  font-size: 20px;
}

.status {
  display: flex;
  align-items: center;
  margin-left: 30px;
}

.status button {
  width: 36px;
  height: 36px;
}

.lang,
.clock {
  display: flex;
  flex-direction: column;
  align-items: center;
  line-height: 28px;
}

.lang {
  width: 56px;
}

.clock {
  width: 104px;
  font-size: 18px;
}

.notice {
  position: relative;
  justify-content: flex-start;
  width: 72px;
  height: 60px;
  padding-left: 18px;
}

.notice span {
  position: absolute;
  left: 30px;
  top: 29px;
  width: 25px;
  height: 25px;
  border: 1px solid #9a958e;
  border-radius: 50%;
  background: #393a3c;
  font-size: 15px;
  font-weight: 600;
  line-height: 23px;
  text-align: center;
}

.peek {
  align-self: stretch;
  width: 8px;
  border-left: 2px solid #8d887f;
}
</style>
